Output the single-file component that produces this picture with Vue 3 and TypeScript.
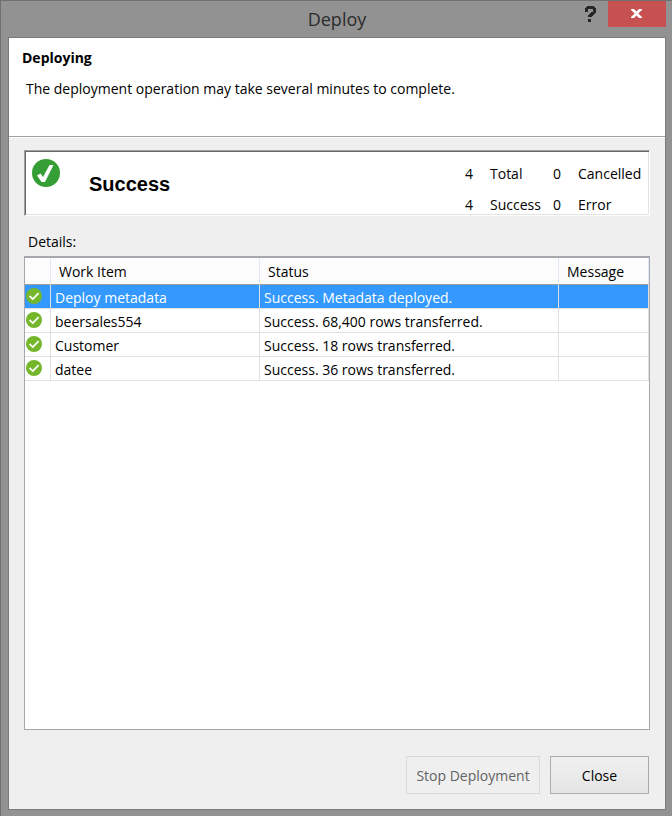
<script setup lang="ts">
interface WorkItem {
  name: string
  status: string
  message: string
}

const items: WorkItem[] = [
  { name: 'Deploy metadata', status: 'Success. Metadata deployed.', message: '' },
  { name: 'beersales554', status: 'Success. 68,400 rows transferred.', message: '' },
  { name: 'Customer', status: 'Success. 18 rows transferred.', message: '' },
  { name: 'datee', status: 'Success. 36 rows transferred.', message: '' },
]
const selected = 0
</script>

<template>
  <div class="window">
    <header class="titlebar">
      <h1 class="title">Deploy</h1>
      <div class="controls">
        <button class="help" type="button" aria-label="Help">
          <svg width="12" height="16" viewBox="0 0 12 16" aria-hidden="true">
            <path d="M2 0h7v1h1v1h1v5h-1v1H9v1H8v1H7v1H3V9h1V8h1V7h1V6h2V3H3v3H0V2h1V1h1zM3 13h3v3H3z" fill="#262626" />
          </svg>
        </button>
        <button class="close-x" type="button" aria-label="Close window">
          <svg width="12" height="10" viewBox="0 0 12 10" aria-hidden="true">
            <path d="M0 0h3l2.5 2.6L8 0h3v1L7.3 4.5L11 8v1H8L5.500 6.400L3 9H0V8l3.700-3.500L0 1z" fill="#fff" />
          </svg>
        </button>
      </div>
    </header>

    <main class="client">
      <section class="intro">
        <h2 class="heading">Deploying</h2>
        <p class="description">The deployment operation may take several minutes to complete.</p>
      </section>

      <section class="content">
        <div class="summary">
          <svg class="big-check" width="28" height="28" viewBox="0 0 28 28" aria-hidden="true">
            <circle cx="14" cy="14" r="14" fill="#359f36" />
            <path d="M5 16.500L8.500 14.500L11 18L17.500 6H21.500L13 23H9.500z" fill="#fff" />
          </svg>
          <strong class="result">Success</strong>
          <div class="counts">
            <span>4</span><span>Total</span><span>0</span><span>Cancelled</span>
            <span>4</span><span>Success</span><span>0</span><span>Error</span>
          </div>
        </div>

        <h3 id="details-label" class="details-label">Details:</h3>
        <div class="grid-box">
          <table class="grid" aria-labelledby="details-label">
            <colgroup>
              <col class="col-icon" />
              <col class="col-item" />
              <col class="col-status" />
              <col />
            </colgroup>
            <thead>
              <tr>
                <th></th>
                <th>Work Item</th>
                <th>Status</th>
                <th>Message</th>
              </tr>
            </thead>
            <tbody>
              <tr v-for="(item, i) in items" :key="item.name" :class="{ selected: i === selected }">
                <td class="icon-cell">
                  <svg width="16" height="16" viewBox="0 0 16 16" aria-hidden="true">
                    <circle cx="8" cy="8" r="8" fill="#74b72b" />
                    <path d="M3.5 7.8L6.8 11L12.6 5.2" stroke="#fff" stroke-width="1.7" fill="none" />
                  </svg>
                </td>
                <td>{{ item.name }}</td>
                <td>{{ item.status }}</td>
                <td>{{ item.message }}</td>
              </tr>
            </tbody>
          </table>
        </div>

        <footer class="actions">
          <button class="btn" type="button" disabled>Stop Deployment</button>
          <button class="btn" type="button">Close</button>
        </footer>
      </section>
    </main>
  </div>
</template>

<style>
body {
  margin: 0;
}
</style>

<style scoped>
.window {
  box-sizing: border-box;
  display: flex;
  flex-direction: column;
  min-height: 100vh;
  padding: 0 6px 6px 7px;
  border-top: 1px solid #707070;
  border-left: 1px solid #707070;
  background: #929292;
  color: #000;
  font: 14px/20px "Open Sans", "Noto Sans", sans-serif;
}

h1,
h2,
h3,
p {
  margin: 0;
}

button {
  padding: 0;
  font: inherit;
}

.titlebar {
  display: grid;
  grid-template-columns: 1fr auto 1fr;
  height: 36px;
}

.title {
  grid-column: 2;
  color: #2b2b2b;
  font-size: 18px;
  font-weight: 400;
  line-height: 36px;
}

.controls {
  display: flex;
  justify-content: flex-end;
  align-items: flex-start;
}

.help,
.close-x {
  display: flex;
  align-items: center;
  justify-content: center;
  height: 26px;
  border: 0;
}

.help {
  width: 34px;
  background: none;
}

.close-x {
  width: 58px;
  background: #c75050;
}

.client {
  display: flex;
  flex: 1;
  flex-direction: column;
  border: 1px solid #7b7b7b;
  background: #efefef;
}

.intro {
  min-height: 88px;
  padding: 10px 13px 0;
  border-bottom: 1px solid #a0a0a0;
  background: #fff;
  box-shadow: 0 1px #fff;
}

.heading {
  font-size: 14px;
  font-weight: 700;
}

.description {
  margin: 11px 4px 0;
}

.content {
  display: flex;
  flex: 1;
  flex-direction: column;
  padding: 13px 15px 15px;
}

.summary {
  display: flex;
  box-sizing: border-box;
  height: 66px;
  border: 1px solid;
  border-color: #a0a0a0 #fff #fff #a0a0a0;
  background: #fff;
  box-shadow: inset 1px 1px #696969, inset -1px -1px #e3e3e3;
}

.big-check {
  margin: 8px 0 0 7px;
}

.result {
  margin: 20px auto 0 29px;
  font: 700 20px/26px "Liberation Sans", Arial, sans-serif;
}

.counts {
  display: grid;
  grid-template-columns: 25px 63px 25px 66px;
  grid-auto-rows: 31px;
  padding-top: 13px;
  margin-right: 5px;
}

.details-label {
  margin: 16px 4px 4px;
  font-size: 14px;
  font-weight: 400;
}

.grid-box {
  flex: 1;
  border: 1px solid #a5a8ad;
  border-top-width: 2px;
  background: #fff;
}

.grid {
  width: 100%;
  border-spacing: 0;
  table-layout: fixed;
}

.col-icon {
  width: 26px;
}

.col-item {
  width: 209px;
}

.col-status {
  width: 299px;
}

th {
  box-sizing: border-box;
  height: 27px;
  padding: 2px 8px 0;
  border-right: 1px solid #e3e9f7;
  border-bottom: 1px solid #a0a0a0;
  background: #fcfcfc;
  font-weight: 400;
  text-align: left;
}

td {
  box-sizing: border-box;
  height: 24px;
  padding: 2px 4px 0;
  border-right: 1px solid #e0e0e0;
  border-bottom: 1px solid #e0e0e0;
  line-height: 20px;
}

.icon-cell {
  padding: 3px 1px 0;
  vertical-align: top;
}

.icon-cell svg {
  display: block;
}

.selected td {
  background: #3399ff;
  color: #fff;
}

.actions {
  display: flex;
  justify-content: flex-end;
  gap: 10px;
  padding: 26px 1px 0 0;
}

.btn {
  box-sizing: border-box;
  min-width: 99px;
  height: 38px;
  padding: 2px 7px 0;
  border: 1px solid #acacac;
  background: linear-gradient(#f0f0f0, #e5e5e5);
  color: #000;
}

.btn:disabled {
  min-width: 134px;
  border-color: #d9d9d9;
  background: #efefef;
  color: #636363;
}
</style>
